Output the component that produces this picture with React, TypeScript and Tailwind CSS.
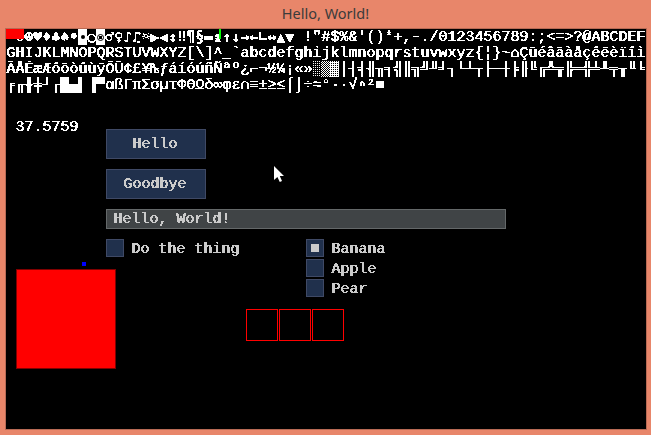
const GLYPH_ROWS = [
  " ☺☻♥♦♣♠•◘○◙♂♀♪♫☼▶◀↕‼¶§▬↨↑↓→←∟↔▲▼ !\"#$%&'()*+,-./0123456789:;<=>?@ABCDEF",
  "GHIJKLMNOPQRSTUVWXYZ[\\]^_`abcdefghijklmnopqrstuvwxyz{¦}~⌂Çüéâäàåçêëèïîì",
  "ÄÅÉæÆôöòûùÿÖÜ¢£¥₧ƒáíóúñÑªº¿⌐¬½¼¡«»░▒▓│┤╡╢╖╕╣║╗╝╜╛┐└┴┬├─┼╞╟╚╔╩╦╠═╬╧╨╤╥╙╘",
  "╒╓╫╪┘┌█▄▌▐▀αßΓπΣσµτΦΘΩδ∞φε∩≡±≥≤⌠⌡÷≈°∙·√ⁿ²■",
];

const SYMBOLS = "☺☻♥♦♣♠•○♂♀♪♫☼▶◀↕¶§▬↨↑↓→←∟↔▲▼";
const BLOCKS = "█▄▌▐▀";

const SHADE_FILL: Record<string, string> = {
  "░": "bg-[conic-gradient(#fff_25%,transparent_0)] bg-size-[2px_2px]",
  "▒": "bg-[conic-gradient(#fff_25%,transparent_0_50%,#fff_0_75%,transparent_0)] bg-size-[2px_2px]",
  "▓": "bg-[conic-gradient(transparent_25%,#fff_0)] bg-size-[2px_2px]",
};

const MONO =
  "font-['Liberation_Mono','DejaVu_Sans_Mono',monospace] text-[15px] leading-[18px] whitespace-pre [text-shadow:1px_0_0_currentColor] [filter:url(#crisp)]";

function Glyph({ ch }: { ch: string }) {
  if (ch in SHADE_FILL) {
    return <span className={`h-4 w-[9px] shrink-0 ${SHADE_FILL[ch]}`} />;
  }
  if (ch === "◘" || ch === "◙") {
    return (
      <span className="flex h-4 w-[9px] shrink-0 items-center justify-center bg-white">
        {ch === "◘" ? (
          <span className="size-1 rounded-full bg-black" />
        ) : (
          <span className="flex size-[7px] items-center justify-center rounded-full border border-black">
            <span className="size-[3px] bg-black" />
          </span>
        )}
      </span>
    );
  }
  if (SYMBOLS.includes(ch)) {
    return (
      <span className="flex h-4 w-[9px] shrink-0 justify-center overflow-hidden font-['DejaVu_Sans_Mono',monospace] leading-4 font-bold [text-shadow:0.5px_0_0_currentColor]">
        {ch}
      </span>
    );
  }
  if (BLOCKS.includes(ch)) {
    return (
      <span className="flex h-4 w-[9px] shrink-0 justify-center overflow-hidden [text-shadow:none]">
        {ch}
      </span>
    );
  }
  return <span className="flex h-4 w-[9px] shrink-0 justify-center overflow-hidden">{ch}</span>;
}

function Button({ label }: { label: string }) {
  return (
    <button className="flex h-[30px] w-[100px] items-center justify-center border border-[#3f4965] bg-[#20304c] pr-[3px] text-[#cbcbcb]">
      <span className={`h-4 ${MONO}`}>{label}</span>
    </button>
  );
}

function Option({ label, on = false }: { label: string; on?: boolean }) {
  return (
    <div className="flex h-[18px] gap-[7px] text-[#cbcbcb]">
      <span className="flex size-[18px] items-center justify-center border border-[#3f4965] bg-[#20304c]">
        {on && <span className="size-2 bg-[#cbcbcb]" />}
      </span>
      <span className={`mt-0.5 h-[18px] ${MONO}`}>{label}</span>
    </div>
  );
}

export default function App() {
  return (
    <div className="flex h-[435px] w-[651px] flex-col overflow-hidden bg-[#e8866a]">
      <svg className="absolute size-0" aria-hidden="true">
        <filter id="crisp" colorInterpolationFilters="sRGB" x="0" y="0" width="1" height="1.15">
          <feComponentTransfer>
            <feFuncA type="discrete" tableValues="0 0 0 0 0 0 1 1 1 1" />
          </feComponentTransfer>
        </filter>
      </svg>
      <header className="flex h-7 shrink-0 items-center justify-center font-['Noto_Sans','Open_Sans',sans-serif] text-[14.5px] text-[#3b3b3b]">
        Hello, World!
      </header>
      <main className="relative ml-[5px] h-[402px] w-[642px] overflow-hidden border border-[#b86a54] bg-black">
        <div className={`flex h-16 flex-col text-white ${MONO}`}>
          {GLYPH_ROWS.map((row, r) => (
            <div key={r} className="flex h-4">
              {Array.from(row).map((ch, c) => (
                <Glyph key={c} ch={ch} />
              ))}
            </div>
          ))}
        </div>
        <div className="flex pt-[26px]">
          <div className="flex w-[100px] shrink-0 flex-col">
            <span className={`ml-[9px] h-4 text-white ${MONO}`}>37.5759</span>
            <div className="mt-[127px] ml-[76px] size-1 bg-[#0000ff]" />
            <div className="mt-[3px] ml-[10px] size-[100px] shrink-0 border border-[#800000] bg-[#ff0000]" />
          </div>
          <div className="flex w-[400px] flex-col pt-[10px]">
            <div className="flex flex-col gap-[10px]">
              <Button label="Hello" />
              <Button label="Goodbye" />
              <div className="flex h-5 items-center border border-[#646869] bg-[#404446] pl-1.5 text-[#cbcbcb]">
                <span className={`h-4 ${MONO}`}>Hello, World!</span>
              </div>
            </div>
            <div className="mt-[10px] flex">
              <div className="w-[200px]">
                <Option label="Do the thing" />
              </div>
              <div className="flex flex-col gap-0.5">
                <Option label="Banana" on />
                <Option label="Apple" />
                <Option label="Pear" />
              </div>
            </div>
            <div className="mt-3 ml-[140px] flex gap-px">
              <div className="size-8 border border-[#ff0000]" />
              <div className="size-8 border border-[#ff0000]" />
              <div className="size-8 border border-[#ff0000]" />
            </div>
          </div>
        </div>
        <div className="absolute top-0 left-0 h-[10px] w-[18px] bg-[#ff0000]" />
        <div className="absolute top-0 left-[213px] h-[10px] w-0.5 bg-[#00ff00]" />
        <svg className="absolute top-[136px] left-[267px]" width="12" height="18" viewBox="0 0 12 18">
          <path d="M1 1V15L4.4 12L6.8 17L9 16L6.8 11H11Z" fill="#fff" />
        </svg>
      </main>
    </div>
  );
}
